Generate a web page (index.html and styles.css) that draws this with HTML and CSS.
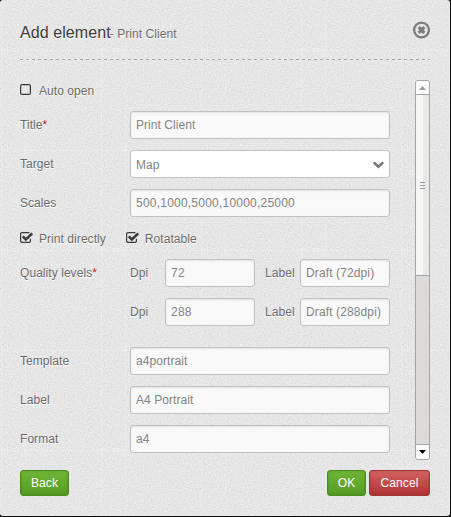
FILE: index.html
```html
<!DOCTYPE html>
<html lang="en">
<head>
<meta charset="utf-8">
<title>Add element</title>
<link rel="stylesheet" href="styles.css">
</head>
<body>
<main class="dialog">
  <header class="header">
    <h1 class="title">Add element</h1><span class="subtitle">- Print Client</span>
    <svg class="close" width="18" height="18" viewBox="0 0 18 18"><circle cx="9.5" cy="9" r="7.4" fill="none" stroke="#7c7c7c" stroke-width="2.3"/><path d="M6.7 6.2l5.6 5.6M12.3 6.2l-5.6 5.6" stroke="#7c7c7c" stroke-width="3.2"/></svg>
  </header>
  <div class="content">
    <form class="form">
      <div class="checks">
        <span class="check"><svg width="14" height="14" viewBox="0 0 14 14"><rect x=".6" y=".6" width="9.8" height="9.8" rx="1.5" class="box"/></svg>Auto open</span>
      </div>
      <div class="row"><label class="label">Title<b class="req">*</b></label><div class="field">Print Client</div></div>
      <div class="row"><label class="label">Target</label><div class="field select">Map<svg width="12" height="8" viewBox="0 0 12 8"><path d="M1.7 1.4L6.4 5.8l4.7-4.4" fill="none" stroke="#777" stroke-width="2.6"/></svg></div></div>
      <div class="row"><label class="label">Scales</label><div class="field digits">500,1000,5000,10000,25000</div></div>
      <div class="checks">
        <span class="check"><svg width="14" height="14" viewBox="0 0 14 14"><path d="M10.4 6.8V9a1.4 1.4 0 0 1-1.4 1.4H2A1.4 1.4 0 0 1 .6 9V2A1.4 1.4 0 0 1 2 .6h7.5" class="box"/><path d="M2.8 4.4l3 3L12.3 1.4" class="tick"/></svg>Print directly</span>
        <span class="check"><svg width="14" height="14" viewBox="0 0 14 14"><path d="M10.4 6.8V9a1.4 1.4 0 0 1-1.4 1.4H2A1.4 1.4 0 0 1 .6 9V2A1.4 1.4 0 0 1 2 .6h7.5" class="box"/><path d="M2.8 4.4l3 3L12.3 1.4" class="tick"/></svg>Rotatable</span>
      </div>
      <div class="row"><label class="label">Quality levels<b class="req">*</b></label><label class="dpi">Dpi</label><div class="field small">72</div><label class="sub">Label</label><div class="field">Draft (72dpi)</div></div>
      <div class="row last-level"><span class="label"></span><label class="dpi">Dpi</label><div class="field small">288</div><label class="sub">Label</label><div class="field">Draft (288dpi)</div></div>
      <div class="row"><label class="label">Template</label><div class="field">a4portrait</div></div>
      <div class="row"><label class="label">Label</label><div class="field">A4 Portrait</div></div>
      <div class="row"><label class="label">Format</label><div class="field">a4</div></div>
    </form>
    <div class="scrollbar">
      <div class="arrow"><svg width="7" height="4" viewBox="0 0 7 4"><path d="M3.5 0L7 4H0z" fill="#999"/></svg></div>
      <div class="thumb"><i></i><i></i><i></i></div>
      <div class="track"></div>
      <div class="arrow"><svg width="7" height="4" viewBox="0 0 7 4"><path d="M0 0h7L3.5 4z" fill="#000"/></svg></div>
    </div>
  </div>
  <footer class="footer">
    <button class="btn back">Back</button>
    <button class="btn ok">OK</button>
    <button class="btn cancel">Cancel</button>
  </footer>
</main>
</body>
</html>
```

FILE: styles.css
```css
* { box-sizing: border-box; }
body {
  margin: 0;
  background: #111;
  font: 12px/20px "Liberation Sans", Arial, sans-serif;
  letter-spacing: .06px;
  color: #6c6c6c;
}
.dialog {
  width: 450px;
  height: 516px;
  padding: 20px;
  border-radius: 3px;
  background-color: #e6e6e6;
  background-image: url("data:image/svg+xml,%3Csvg xmlns='http://www.w3.org/2000/svg' width='100' height='100'%3E%3Cfilter id='n' x='0' y='0' width='100%25' height='100%25' color-interpolation-filters='sRGB'%3E%3CfeTurbulence type='fractalNoise' baseFrequency='.7' numOctaves='2' stitchTiles='stitch'/%3E%3CfeColorMatrix values='.12 0 0 0 .842 .12 0 0 0 .842 .12 0 0 0 .842 0 0 0 0 1'/%3E%3C/filter%3E%3Crect width='100' height='100' filter='url(%23n)'/%3E%3Cpath d='M1.5 0v100M0 50.5h100M25.5 0v100' stroke='%23fff' stroke-opacity='.16'/%3E%3C/svg%3E");
  text-shadow: 0 1px 0 #fff;
}
.header {
  display: flex;
  align-items: baseline;
  height: 40px;
  line-height: 25px;
  background: repeating-linear-gradient(90deg, #aaa 0 3px, transparent 3px 6px) 0 39px / 100% 1px no-repeat;
}
.title { margin: 0; font-size: 16px; font-weight: 400; color: #3a3a3a; letter-spacing: .08px; }
.subtitle { flex: 1; margin-left: -1px; }
.close { align-self: flex-start; margin-top: 1px; }
.content {
  display: flex;
  justify-content: space-between;
  height: 380px;
  margin-top: 20px;
}
.form { width: 370px; }
.row { display: flex; height: 28px; margin-bottom: 11px; }
.row > label { line-height: 28px; }
.label { width: 110px; flex: none; }
.req { font-weight: 400; color: #b52020; }
.field {
  flex: 1;
  min-width: 0;
  height: 28px;
  padding: 0 5px;
  border: 1px solid #c2c2c2;
  border-radius: 3px;
  background: #f9f9f9;
  box-shadow: inset 0 1px 2px rgba(0,0,0,.1);
  line-height: 26px;
  color: #848484;
  text-shadow: none;
  white-space: nowrap;
}
.digits { letter-spacing: .22px; }
.select {
  display: flex;
  align-items: center;
  justify-content: space-between;
  background: #fff;
  box-shadow: none;
  padding-top: 2px;
}
.dpi { width: 35px; }
.small { flex: none; width: 90px; letter-spacing: .25px; }
.sub { width: 45px; padding-left: 10px; }
.sub + .field { letter-spacing: .12px; }
.last-level { margin-bottom: 21px; }
.checks { display: flex; gap: 20px; height: 21px; padding-top: 1px; margin-bottom: 10px; }
.check { display: flex; align-items: center; gap: 5px; }
.box { fill: none; stroke: #3a3a3a; stroke-width: 1.2; }
.tick { fill: none; stroke: #3a3a3a; stroke-width: 2.6; }
.scrollbar {
  display: flex;
  flex-direction: column;
  width: 15px;
  height: 380px;
  border: 1px solid #a5a5a5;
  border-radius: 3px;
  overflow: hidden;
  background: #dcdbda;
}
.arrow { display: flex; align-items: center; justify-content: center; flex: none; height: 14px; background: #fcfcfc; }
.thumb {
  display: flex;
  flex-direction: column;
  align-items: center;
  justify-content: center;
  gap: 2px;
  flex: none;
  height: 182px;
  margin-top: -1px;
  border: solid #a5a5a5;
  border-width: 1px 0;
  background: linear-gradient(90deg, #f7f7f6 7px, #eae9e8 7px);
}
.thumb i { width: 5px; height: 1px; background: #999; }
.track { flex: 1; border-bottom: 1px solid #a5a5a5; }
.footer { display: flex; gap: 3px; margin-top: 10px; }
.btn {
  height: 26px;
  padding: 0;
  border: 1px solid #4d8d20;
  border-radius: 3px;
  background: linear-gradient(#6fb536, #579c25);
  box-shadow: inset 0 0 3px rgba(0,0,0,.15);
  font: inherit;
  letter-spacing: .1px;
  line-height: 24px;
  color: #fff;
  text-shadow: none;
}
.back { width: 49px; margin-right: auto; }
.ok { width: 39px; }
.cancel { width: 61px; border-color: #a23434; background: linear-gradient(#d46262, #af3434); }
```
